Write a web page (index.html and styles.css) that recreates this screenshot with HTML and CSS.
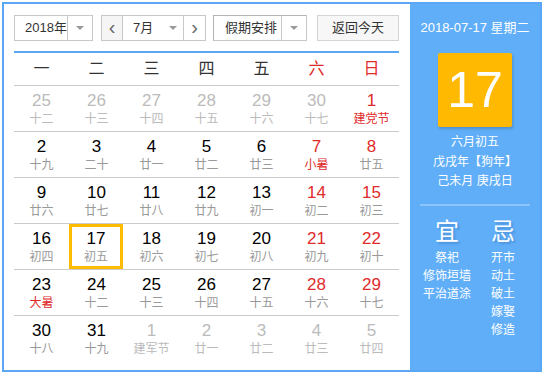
FILE: index.html
```html
<!DOCTYPE html>
<html>
  <head>
    <meta charset="utf-8">
    <title>万年历</title>
    <link rel="stylesheet" href="styles.css">
  </head>
  <body>
    <div class="calendar">
      <div class="main">
        <div class="toolbar">
          <div class="select year-select">
            <div class="select-text">2018年</div>
            <div class="select-arrow"></div>
          </div>
          <div class="month-group">
            <div class="nav-btn">&lsaquo;</div>
            <div class="select month-select">
              <div class="select-text">7月</div>
              <div class="select-arrow plain"></div>
            </div>
            <div class="nav-btn">&rsaquo;</div>
          </div>
          <div class="select holiday-select">
            <div class="select-text">假期安排</div>
            <div class="select-arrow"></div>
          </div>
          <div class="today-btn">返回今天</div>
        </div>

        <div class="week-head">
          <div>一</div><div>二</div><div>三</div><div>四</div><div>五</div>
          <div class="red">六</div><div class="red">日</div>
        </div>

        <div class="week">
          <div class="day dim"><div class="num">25</div><div class="lunar">十二</div></div>
          <div class="day dim"><div class="num">26</div><div class="lunar">十三</div></div>
          <div class="day dim"><div class="num">27</div><div class="lunar">十四</div></div>
          <div class="day dim"><div class="num">28</div><div class="lunar">十五</div></div>
          <div class="day dim"><div class="num">29</div><div class="lunar">十六</div></div>
          <div class="day dim"><div class="num">30</div><div class="lunar">十七</div></div>
          <div class="day weekend"><div class="num">1</div><div class="lunar fest">建党节</div></div>
        </div>
        <div class="week">
          <div class="day"><div class="num">2</div><div class="lunar">十九</div></div>
          <div class="day"><div class="num">3</div><div class="lunar">二十</div></div>
          <div class="day"><div class="num">4</div><div class="lunar">廿一</div></div>
          <div class="day"><div class="num">5</div><div class="lunar">廿二</div></div>
          <div class="day"><div class="num">6</div><div class="lunar">廿三</div></div>
          <div class="day weekend"><div class="num">7</div><div class="lunar fest">小暑</div></div>
          <div class="day weekend"><div class="num">8</div><div class="lunar">廿五</div></div>
        </div>
        <div class="week">
          <div class="day"><div class="num">9</div><div class="lunar">廿六</div></div>
          <div class="day"><div class="num">10</div><div class="lunar">廿七</div></div>
          <div class="day"><div class="num">11</div><div class="lunar">廿八</div></div>
          <div class="day"><div class="num">12</div><div class="lunar">廿九</div></div>
          <div class="day"><div class="num">13</div><div class="lunar">初一</div></div>
          <div class="day weekend"><div class="num">14</div><div class="lunar">初二</div></div>
          <div class="day weekend"><div class="num">15</div><div class="lunar">初三</div></div>
        </div>
        <div class="week">
          <div class="day"><div class="num">16</div><div class="lunar">初四</div></div>
          <div class="day today"><div class="num">17</div><div class="lunar">初五</div></div>
          <div class="day"><div class="num">18</div><div class="lunar">初六</div></div>
          <div class="day"><div class="num">19</div><div class="lunar">初七</div></div>
          <div class="day"><div class="num">20</div><div class="lunar">初八</div></div>
          <div class="day weekend"><div class="num">21</div><div class="lunar">初九</div></div>
          <div class="day weekend"><div class="num">22</div><div class="lunar">初十</div></div>
        </div>
        <div class="week">
          <div class="day"><div class="num">23</div><div class="lunar fest">大暑</div></div>
          <div class="day"><div class="num">24</div><div class="lunar">十二</div></div>
          <div class="day"><div class="num">25</div><div class="lunar">十三</div></div>
          <div class="day"><div class="num">26</div><div class="lunar">十四</div></div>
          <div class="day"><div class="num">27</div><div class="lunar">十五</div></div>
          <div class="day weekend"><div class="num">28</div><div class="lunar">十六</div></div>
          <div class="day weekend"><div class="num">29</div><div class="lunar">十七</div></div>
        </div>
        <div class="week">
          <div class="day"><div class="num">30</div><div class="lunar">十八</div></div>
          <div class="day"><div class="num">31</div><div class="lunar">十九</div></div>
          <div class="day dim"><div class="num">1</div><div class="lunar">建军节</div></div>
          <div class="day dim"><div class="num">2</div><div class="lunar">廿一</div></div>
          <div class="day dim"><div class="num">3</div><div class="lunar">廿二</div></div>
          <div class="day dim"><div class="num">4</div><div class="lunar">廿三</div></div>
          <div class="day dim"><div class="num">5</div><div class="lunar">廿四</div></div>
        </div>
      </div>

      <div class="side">
        <div class="side-date">2018-07-17 星期二</div>
        <div class="big-day">17</div>
        <div class="side-lunar">
          <div>六月初五</div>
          <div>戊戌年【狗年】</div>
          <div>己未月 庚戌日</div>
        </div>
        <div class="side-line"></div>
        <div class="advice">
          <div class="advice-col">
            <div class="advice-title">宜</div>
            <div>祭祀</div>
            <div>修饰垣墙</div>
            <div>平治道涂</div>
          </div>
          <div class="advice-col">
            <div class="advice-title">忌</div>
            <div>开市</div>
            <div>动土</div>
            <div>破土</div>
            <div>嫁娶</div>
            <div>修造</div>
          </div>
        </div>
      </div>
    </div>
  </body>
</html>
```

FILE: styles.css
```css
body {
  margin: 0;
  background-color: #fff;
  font-family: "Liberation Sans", "Noto Sans CJK SC", sans-serif;
}

.calendar {
  margin: 2px;
  width: 540px;
  height: 370px;
  box-sizing: border-box;
  border: 2px solid #5ba7f3;
  display: flex;
}

.main {
  width: 406px;
  padding: 11px 11px 0 10px;
  box-sizing: border-box;
}

/* toolbar */
.toolbar {
  display: flex;
  height: 26px;
  font-size: 13px;
  color: #333;
  border-bottom: 2px solid #5ba7f3;
  padding-bottom: 10px;
  box-sizing: content-box;
  white-space: nowrap;
}

.select {
  display: flex;
  border: 1px solid #c8c8c8;
  box-sizing: border-box;
  background-color: #fff;
}
.select-text {
  flex-grow: 1;
  line-height: 24px;
  padding-left: 10px;
  overflow: hidden;
}
.select-arrow {
  width: 24px;
  flex-shrink: 0;
  border-left: 1px solid #c8c8c8;
  display: flex;
  align-items: center;
  justify-content: center;
}
.select-arrow::after {
  content: "";
  border-left: 4px solid transparent;
  border-right: 4px solid transparent;
  border-top: 4px solid #999;
}
.select-arrow.plain {
  border-left: none;
  width: 20px;
}

.year-select {
  width: 79px;
}

.month-group {
  display: flex;
  margin-left: 8px;
  width: 105px;
}
.nav-btn {
  width: 22px;
  border: 1px solid #c8c8c8;
  box-sizing: border-box;
  background-color: #f5f5f5;
  text-align: center;
  line-height: 22px;
  font-size: 20px;
  color: #666;
}
.nav-btn:last-child {
  width: 23px;
  background-color: #fff;
}
.month-select {
  width: 60px;
  border-left: none;
  border-right: none;
}

.holiday-select {
  width: 94px;
  margin-left: 7px;
  border-color: #b4b4b4 #c8c8c8 #c8c8c8 #b4b4b4;
}
.holiday-select .select-text {
  padding-left: 11px;
}

.today-btn {
  width: 82px;
  margin-left: 10px;
  border: 1px solid #d4d4d4;
  box-sizing: border-box;
  background-color: #f7f7f7;
  text-align: center;
  line-height: 24px;
}

/* grid */
.week-head, .week {
  display: grid;
  grid-template-columns: repeat(7, 55px);
}
.week-head {
  height: 32px;
  line-height: 32px;
  text-align: center;
  font-size: 16px;
  color: #333;
}
.red {
  color: #e02b2b;
}

.week {
  height: 46px;
  border-top: 1px solid #cacaca;
  box-sizing: border-box;
}
.day {
  text-align: center;
  padding-top: 5px;
  box-sizing: border-box;
}
.num {
  font-size: 17px;
  line-height: 20px;
  color: #000;
}
.lunar {
  font-size: 12px;
  line-height: 17px;
  color: #999;
}
.weekend .num, .lunar.fest {
  color: #e02b2b;
}
.dim .num, .dim .lunar {
  color: #bbb;
}
.day.today {
  border: 3px solid #ffbb00;
  padding-top: 2px;
  margin-right: 1px;
}

/* side panel */
.side {
  flex-grow: 1;
  background-color: #60aef8;
  color: #fff;
  text-align: center;
  padding-top: 14px;
}
.side-date {
  font-size: 13px;
  line-height: 20px;
}
.big-day {
  width: 74px;
  height: 74px;
  margin: 15px auto 0;
  background-color: #ffb900;
  border-radius: 2px;
  box-shadow: 1px 2px 3px rgba(0, 0, 0, 0.18);
  font-size: 50px;
  line-height: 74px;
}
.side-lunar {
  margin-top: 6px;
  font-size: 12px;
  line-height: 19.5px;
}
.side-line {
  width: 110px;
  height: 2px;
  margin: 12px auto 0;
  background-color: #8cc5fb;
}
.advice {
  display: flex;
  justify-content: center;
  font-size: 12px;
  line-height: 18px;
  margin-top: 11px;
}
.advice-col {
  width: 56px;
}
.advice-title {
  font-size: 24px;
  line-height: 30px;
  margin-bottom: 2px;
  text-shadow: 2px 2px 2px rgba(0, 40, 100, 0.2);
}
```
